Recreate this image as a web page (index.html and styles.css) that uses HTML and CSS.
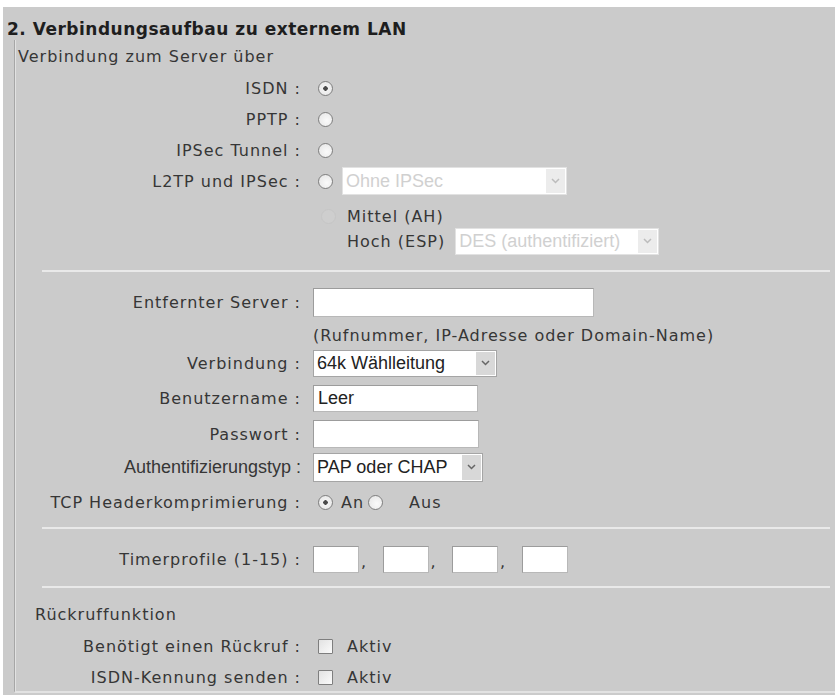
FILE: index.html
```html
<!DOCTYPE html>
<html lang="de">
<head>
    <meta charset="UTF-8">
    <title>Verbindungsaufbau zu externem LAN</title>
    <link rel="stylesheet" href="styles.css">
</head>
<body>
    <div class="panel">
        <h2 class="title">2. Verbindungsaufbau zu externem LAN</h2>

        <div class="box">
            <div class="sub">Verbindung zum Server über</div>

            <div class="row">
                <span class="lbl">ISDN :</span>
                <span class="field"><input type="radio" name="via" class="radio" checked></span>
            </div>
            <div class="row">
                <span class="lbl">PPTP :</span>
                <span class="field"><input type="radio" name="via" class="radio"></span>
            </div>
            <div class="row">
                <span class="lbl">IPSec Tunnel :</span>
                <span class="field"><input type="radio" name="via" class="radio"></span>
            </div>
            <div class="row">
                <span class="lbl">L2TP und IPSec :</span>
                <span class="field">
                    <input type="radio" name="via" class="radio">
                    <span class="sel sel-ipsec off">
                        <select disabled><option>Ohne IPSec</option></select>
                        <span class="arrow"><svg width="9" height="6" viewBox="0 0 9 6"><polyline points="1,1 4.5,4.5 8,1" fill="none" stroke="currentColor" stroke-width="1.5"/></svg></span>
                    </span>
                </span>
            </div>
            <div class="row sp-m">
                <span class="lbl"></span>
                <span class="field">
                    <input type="radio" name="level" class="radio faint" disabled>
                    <span class="opt">Mittel (AH)</span>
                </span>
            </div>
            <div class="row pull">
                <span class="lbl"></span>
                <span class="field">
                    <span class="indent">Hoch (ESP)</span>
                    <span class="sel sel-des off">
                        <select disabled><option>DES (authentifiziert)</option></select>
                        <span class="arrow"><svg width="9" height="6" viewBox="0 0 9 6"><polyline points="1,1 4.5,4.5 8,1" fill="none" stroke="currentColor" stroke-width="1.5"/></svg></span>
                    </span>
                </span>
            </div>

            <div class="sep sep-top"></div>

            <div class="row">
                <span class="lbl">Entfernter Server :</span>
                <span class="field"><input type="text" class="txt txt-server"></span>
            </div>
            <div class="row sp-s">
                <span class="lbl"></span>
                <span class="field hint">(Rufnummer, IP-Adresse oder Domain-Name)</span>
            </div>
            <div class="row sp-0">
                <span class="lbl">Verbindung :</span>
                <span class="field">
                    <span class="sel sel-conn">
                        <select><option>64k Wählleitung</option></select>
                        <span class="arrow"><svg width="9" height="6" viewBox="0 0 9 6"><polyline points="1,1 4.5,4.5 8,1" fill="none" stroke="currentColor" stroke-width="1.5"/></svg></span>
                    </span>
                </span>
            </div>
            <div class="row sp-m">
                <span class="lbl">Benutzername :</span>
                <span class="field"><input type="text" class="txt txt-user" value="Leer"></span>
            </div>
            <div class="row sp-l">
                <span class="lbl">Passwort :</span>
                <span class="field"><input type="password" class="txt txt-pass"></span>
            </div>
            <div class="row sp-s">
                <span class="lbl lbl-arial">Authentifizierungstyp :</span>
                <span class="field">
                    <span class="sel sel-auth">
                        <select><option>PAP oder CHAP</option></select>
                        <span class="arrow"><svg width="9" height="6" viewBox="0 0 9 6"><polyline points="1,1 4.5,4.5 8,1" fill="none" stroke="currentColor" stroke-width="1.5"/></svg></span>
                    </span>
                </span>
            </div>
            <div class="row sp-m">
                <span class="lbl">TCP Headerkomprimierung :</span>
                <span class="field">
                    <input type="radio" name="tcp" class="radio" checked>
                    <span class="opt-an">An</span>
                    <input type="radio" name="tcp" class="radio radio-aus">
                    <span class="opt-aus">Aus</span>
                </span>
            </div>

            <div class="sep sep-mid"></div>

            <div class="row">
                <span class="lbl">Timerprofile (1-15) :</span>
                <span class="field">
                    <input type="text" class="txt txt-timer"><span class="comma">,</span>
                    <input type="text" class="txt txt-timer"><span class="comma">,</span>
                    <input type="text" class="txt txt-timer"><span class="comma">,</span>
                    <input type="text" class="txt txt-timer">
                </span>
            </div>

            <div class="sep"></div>

            <div class="sub sub-indent">Rückruffunktion</div>
            <div class="row">
                <span class="lbl">Benötigt einen Rückruf :</span>
                <span class="field"><input type="checkbox" class="check"><span class="opt-check">Aktiv</span></span>
            </div>
            <div class="row">
                <span class="lbl">ISDN-Kennung senden :</span>
                <span class="field"><input type="checkbox" class="check"><span class="opt-check">Aktiv</span></span>
            </div>
        </div>
    </div>
</body>
</html>
```

FILE: styles.css
```css
body {
    margin: 0;
    background: #fff;
    font-family: "DejaVu Sans", Verdana, sans-serif;
    font-size: 16px;
    letter-spacing: 1px;
    color: #363636;
}
.panel {
    margin: 7px 0 0 3px;
    height: 688px;
    background: #cbcbcb;
}
.title {
    margin: 0;
    padding: 12px 0 1px 4px;
    font-size: 17px;
    line-height: 20px;
    letter-spacing: 0.5px;
    font-weight: bold;
    color: #1e1e1e;
}
.box {
    display: flex;
    flex-direction: column;
    margin-left: 11px;
    padding-top: 3px;
    border-left: 1px solid #a6a6a6;
    border-bottom: 2px solid #e2e2e2;
    box-shadow: inset 1px 0 #e2e2e2;
}
.sub {
    height: 28px;
    line-height: 28px;
    padding-left: 3px;
}
.sub-indent {
    padding-left: 20px;
}
.row {
    display: flex;
    align-items: center;
    height: 28px;
    margin-top: 3px;
}
.sp-0 { margin-top: 0; }
.sp-s { margin-top: 5px; }
.sp-m { margin-top: 7px; }
.sp-l { margin-top: 8px; }
.pull { margin-top: -3px; }
.lbl {
    flex: none;
    width: 286px;
    text-align: right;
    white-space: nowrap;
}
.lbl-arial {
    font-family: "Liberation Sans", Arial, sans-serif;
    font-size: 18px;
    letter-spacing: 0;
}
.field {
    display: flex;
    align-items: center;
    margin-left: 12px;
    white-space: nowrap;
}
.sep {
    flex: none;
    height: 2px;
    margin: 13px 5px 13px 27px;
    background: #e9e9e9;
}
.sep-top { margin-top: 15px; }
.sep-mid { margin-top: 11px; }

/* radios and checkboxes */
.radio, .check {
    appearance: none;
    -webkit-appearance: none;
    flex: none;
    width: 15px;
    height: 15px;
    margin: 0 0 0 5px;
    border: 1px solid #7e7e7e;
    background: radial-gradient(circle at 60% 60%, #fafafa 0, #e4e4e4 100%);
    box-sizing: border-box;
}
.radio {
    border-radius: 50%;
}
.radio:checked {
    background: radial-gradient(circle, #4a4a4a 0, #4a4a4a 2px, #f2f2f2 2.5px, #e4e4e4 100%);
}
.radio.faint {
    margin-left: 8px;
    border-color: #c6c6c6;
    background: #cecece;
}
.radio-aus {
    margin-left: 4px;
}
.check {
    border-radius: 1px;
    background: linear-gradient(135deg, #e2e2e2, #fbfbfb);
}
.opt {
    margin-left: 11px;
}
.indent {
    margin-left: 34px;
}
.opt-an {
    margin-left: 8px;
}
.opt-aus {
    margin-left: 26px;
}
.opt-check {
    margin-left: 14px;
}
.hint {
    color: #363636;
}

/* text inputs */
.txt {
    box-sizing: border-box;
    margin: 0;
    padding: 0 4px;
    border: 1px solid #9c9c9c;
    border-right-color: #b8b8b8;
    border-bottom-color: #b8b8b8;
    background: #fff;
    font-family: "Liberation Sans", Arial, sans-serif;
    font-size: 18px;
    color: #222;
}
.txt-server { width: 281px; height: 29px; }
.txt-user { width: 165px; height: 27px; }
.txt-pass { width: 166px; height: 28px; }
.txt-timer { width: 46px; height: 27px; }
.comma {
    width: 23.5px;
    align-self: flex-end;
    padding-left: 2px;
    line-height: 22px;
    box-sizing: border-box;
}

/* selects */
.sel {
    display: flex;
    box-sizing: border-box;
    height: 28px;
    border: 1px solid #a5a5a5;
    background: #fff;
}
.sel select {
    appearance: none;
    -webkit-appearance: none;
    flex: 1;
    min-width: 0;
    height: 100%;
    margin: 0;
    padding: 0 3px;
    border: none;
    background: transparent;
    font-family: "Liberation Sans", Arial, sans-serif;
    font-size: 18px;
    color: #222;
}
.sel .arrow {
    display: flex;
    align-items: center;
    justify-content: center;
    width: 19px;
    margin: 1px;
    background: #d8d8d8;
    color: #666;
}
.sel.off {
    border-color: #e2e2e2;
}
.sel.off select {
    color: #bdbdbd;
}
.sel.off .arrow {
    background: #ececec;
    color: #bcbcbc;
}
.sel-ipsec { width: 225px; margin-left: 9px; }
.sel-des { width: 204px; height: 27px; margin-left: 10px; }
.sel-conn { width: 184px; height: 27px; }
.sel-auth { width: 170px; height: 29px; }
```
